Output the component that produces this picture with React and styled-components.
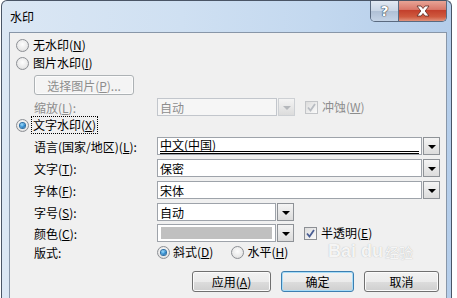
import React from "react";
import styled, { createGlobalStyle } from "styled-components";

const GlobalStyle = createGlobalStyle`
  html, body {
    margin: 0;
    padding: 0;
    background: #ffffff;
  }
  body {
    font-family: "Noto Sans CJK SC", "DejaVu Sans", sans-serif;
    font-size: 12px;
    color: #000;
  }
`;

const Window = styled.div`
  margin-left: 1px;
  width: 451px;
  height: 300px;
  border: 1px solid #4a5566;
  border-bottom: none;
  border-radius: 6px 6px 0 0;
  background: linear-gradient(to right, #dbe7f4 0%, #cfe0f2 40%, #c3d8ef 70%, #b4cdea 100%);
  display: flex;
  flex-direction: column;
  overflow: hidden;
  box-sizing: border-box;
`;

const TitleBar = styled.div`
  height: 31px;
  display: flex;
  align-items: flex-start;
  padding-left: 8px;
  padding-right: 4px;
`;

const Title = styled.div`
  margin-top: 9px;
  font-size: 12px;
  line-height: 14px;
  flex: 1;
`;

const CaptionButtons = styled.div`
  display: flex;
  margin-top: -1px;
  border: 1px solid #5a6a80;
  border-top: none;
  border-radius: 0 0 5px 5px;
  overflow: hidden;
  height: 21px;
`;

const HelpBtn = styled.div`
  width: 27px;
  display: flex;
  align-items: center;
  justify-content: center;
  background: linear-gradient(#e4ebf4 0%, #c9d6e6 50%, #aebfd5 51%, #c4d3e6 100%);
  border-right: 1px solid #5a6a80;
  color: #fff;
  font-family: "DejaVu Sans", sans-serif;
  font-weight: bold;
  font-size: 14px;
  text-shadow: 0 0 1px #33404f, 0 0 1px #33404f, 0 0 1px #33404f;
`;

const CloseBtn = styled.div`
  width: 47px;
  display: flex;
  align-items: center;
  justify-content: center;
  background: linear-gradient(#e9a99b 0%, #d9786a 45%, #c3402c 50%, #cf5a3f 80%, #e0927c 100%);
`;

const Body = styled.div`
  position: relative;
  flex: 1;
  margin: 0 4px 0 7px;
  border: 1px solid #8896a8;
  border-bottom: none;
  background: #f0f0f0;
  padding-top: 3px;
`;

const Row = styled.div`
  display: flex;
  align-items: center;
  height: ${(p) => p.$h || 18}px;
  margin-top: ${(p) => p.$mt || 0}px;
  padding-left: ${(p) => p.$pl || 0}px;
  padding-right: ${(p) => p.$pr || 0}px;
  justify-content: ${(p) => (p.$end ? "flex-end" : "flex-start")};
`;

const RadioMark = styled.span`
  width: 11px;
  height: 11px;
  border-radius: 50%;
  border: 1px solid #8c8f94;
  background: radial-gradient(circle at 50% 40%, #fdfdfd 0%, #e9e9e9 60%, #d2d2d2 100%);
  flex: none;
  display: flex;
  align-items: center;
  justify-content: center;
  margin-left: ${(p) => p.$ml || 0}px;
  &::after {
    content: "";
    width: 5px;
    height: 5px;
    border-radius: 50%;
    background: radial-gradient(circle at 40% 35%, #9fe0ff 0%, #2f8ad0 55%, #16507e 100%);
    box-shadow: 0 0 0 1px #2c6fa4;
    display: ${(p) => (p.$checked ? "block" : "none")};
  }
`;

const Text = styled.span`
  margin-left: ${(p) => p.$ml || 0}px;
  color: ${(p) => (p.$disabled ? "#8d8d8d" : "#000")};
  white-space: nowrap;
  line-height: 14px;
  padding: 1px 1px;
  border: 1px ${(p) => (p.$focus ? "dotted #000" : "solid transparent")};
`;

const Label = styled.span`
  width: 123px;
  flex: none;
  color: ${(p) => (p.$disabled ? "#8d8d8d" : "#000")};
  white-space: nowrap;
`;

const Combo = styled.div`
  display: flex;
  width: ${(p) => p.$w}px;
  height: 18px;
  flex: none;
`;

const ComboEdit = styled.div`
  flex: 1;
  display: flex;
  align-items: center;
  border: 1px solid ${(p) => (p.$disabled ? "#c2c6cc" : "#9ea3aa")};
  background: ${(p) => (p.$disabled ? "#f6f6f6" : "#fff")};
  color: ${(p) => (p.$disabled ? "#8d8d8d" : "#000")};
  padding: 0 2px;
  overflow: hidden;
`;

const SelectedText = styled.div`
  flex: 1;
  align-self: stretch;
  display: flex;
  align-items: center;
  border-bottom: 3px double #000;
  text-decoration: underline;
`;

const Swatch = styled.div`
  flex: 1;
  align-self: stretch;
  margin: 2px 1px;
  background: #c0c0c0;
`;

const ComboArrow = styled.div`
  width: 15px;
  margin-left: 1px;
  display: flex;
  align-items: center;
  justify-content: center;
  border: 1px solid ${(p) => (p.$disabled ? "#cdd0d4" : "#8e9297")};
  background: linear-gradient(#f4f4f4, #dcdcdc);
  &::after {
    content: "";
    border-left: 4px solid transparent;
    border-right: 4px solid transparent;
    border-top: 4px solid ${(p) => (p.$disabled ? "#b5b8bc" : "#000")};
    margin-top: 2px;
  }
`;

const CheckBox = styled.span`
  width: 11px;
  height: 11px;
  flex: none;
  border: 1px solid ${(p) => (p.$disabled ? "#c3c5c8" : "#8c8f94")};
  background: linear-gradient(135deg, #dcdcdc, #fbfbfb);
  display: flex;
  align-items: center;
  justify-content: center;
  margin-left: 10px;
`;

const PushButton = styled.div`
  width: ${(p) => p.$w}px;
  height: ${(p) => p.$h || 21}px;
  box-sizing: border-box;
  display: flex;
  align-items: center;
  justify-content: center;
  border-radius: 3px;
  border: 1px solid ${(p) => (p.$default ? "#3c7fb1" : p.$disabled ? "#adb2b5" : "#707070")};
  background: ${(p) =>
    p.$disabled
      ? "#f4f4f4"
      : "linear-gradient(#f2f2f2 0%, #ebebeb 50%, #dddddd 51%, #cfcfcf 100%)"};
  box-shadow: ${(p) => (p.$default ? "inset 0 0 0 1px #a7dcf8" : "inset 0 0 0 1px #fbfbfb")};
  color: ${(p) => (p.$disabled ? "#8d8d8d" : "#000")};
  white-space: nowrap;
  margin-left: ${(p) => p.$ml || 0}px;
`;

const Watermark = styled.div`
  position: absolute;
  left: 318px;
  top: 208px;
  display: flex;
  align-items: center;
  gap: 2px;
  font-family: "Liberation Sans", sans-serif;
  font-weight: bold;
  font-size: 18px;
  color: rgba(255, 255, 255, 0.9);
  text-shadow: 0 0 1px rgba(140, 140, 140, 0.7);
  pointer-events: none;
  span {
    font-family: "Noto Sans CJK SC", sans-serif;
    font-weight: normal;
    font-size: 14px;
  }
`;

function Check({ disabled }) {
  return (
    <CheckBox $disabled={disabled}>
      <svg width="9" height="9" viewBox="0 0 9 9">
        <path
          d="M1 4.5 L3.5 7.5 L8 1"
          fill="none"
          stroke={disabled ? "#b8bcc2" : "#4a5e94"}
          strokeWidth="1.8"
        />
      </svg>
    </CheckBox>
  );
}

function DropDown({ w, disabled, children }) {
  return (
    <Combo $w={w}>
      <ComboEdit $disabled={disabled}>{children}</ComboEdit>
      <ComboArrow $disabled={disabled} />
    </Combo>
  );
}

export default function App() {
  return (
    <>
      <GlobalStyle />
      <Window>
        <TitleBar>
          <Title>水印</Title>
          <CaptionButtons>
            <HelpBtn>?</HelpBtn>
            <CloseBtn>
              <svg width="14" height="12" viewBox="0 0 14 12">
                <path
                  d="M1 1 H5 L7 3.5 L9 1 H13 L9.2 6 L13 11 H9 L7 8.5 L5 11 H1 L4.8 6 Z"
                  fill="#fff"
                  stroke="#5b2a22"
                  strokeWidth="0.8"
                />
              </svg>
            </CloseBtn>
          </CaptionButtons>
        </TitleBar>
        <Body>
          <Row $pl={6}>
            <RadioMark />
            <Text $ml={2}>无水印(<u>N</u>)</Text>
          </Row>
          <Row $pl={6}>
            <RadioMark />
            <Text $ml={2}>图片水印(<u>I</u>)</Text>
          </Row>
          <Row $pl={24} $h={20} $mt={3}>
            <PushButton $w={100} $h={20} $disabled>选择图片(<u>P</u>)...</PushButton>
          </Row>
          <Row $pl={24} $mt={3}>
            <Label $disabled>缩放(<u>L</u>):</Label>
            <DropDown w={138} disabled>自动</DropDown>
            <Check disabled />
            <Text $ml={2} $disabled>冲蚀(<u>W</u>)</Text>
          </Row>
          <Row $pl={6}>
            <RadioMark $checked />
            <Text $ml={2} $focus>文字水印(<u>X</u>)</Text>
          </Row>
          <Row $pl={24} $mt={3}>
            <Label>语言(国家/地区)(<u>L</u>):</Label>
            <DropDown w={283}>
              <SelectedText>中文(中国)</SelectedText>
            </DropDown>
          </Row>
          <Row $pl={24} $mt={4}>
            <Label>文字(<u>T</u>):</Label>
            <DropDown w={283}>保密</DropDown>
          </Row>
          <Row $pl={24} $mt={4}>
            <Label>字体(<u>F</u>):</Label>
            <DropDown w={283}>宋体</DropDown>
          </Row>
          <Row $pl={24} $mt={4}>
            <Label>字号(<u>S</u>):</Label>
            <DropDown w={137}>自动</DropDown>
          </Row>
          <Row $pl={24} $mt={3}>
            <Label>颜色(<u>C</u>):</Label>
            <DropDown w={137}>
              <Swatch />
            </DropDown>
            <Check />
            <Text $ml={2}>半透明(<u>E</u>)</Text>
          </Row>
          <Row $pl={24} $mt={1}>
            <Label>版式:</Label>
            <RadioMark $checked />
            <Text $ml={1}>斜式(<u>D</u>)</Text>
            <RadioMark $ml={16} />
            <Text $ml={1}>水平(<u>H</u>)</Text>
          </Row>
          <Row $end $pr={7} $h={21} $mt={10}>
            <PushButton $w={79}>应用(<u>A</u>)</PushButton>
            <PushButton $w={73} $ml={10} $default>确定</PushButton>
            <PushButton $w={75} $ml={10}>取消</PushButton>
          </Row>
          <Watermark>
            Bai du <span>经验</span>
          </Watermark>
        </Body>
      </Window>
    </>
  );
}
